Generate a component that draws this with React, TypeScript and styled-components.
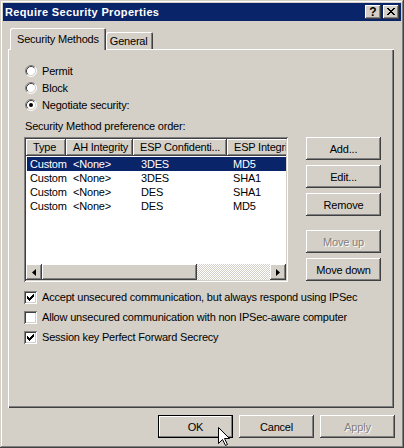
import React from "react";
import styled, { createGlobalStyle } from "styled-components";

const FACE = "#d4d0c8";
const SHADOW = "#808080";
const DARK = "#404040";
const HILITE = "#ffffff";
const NAVY = "#0a246a";

const GlobalStyle = createGlobalStyle`
  html, body { margin: 0; padding: 0; background: ${FACE}; }
  body { font-family: "Liberation Sans", Arial, sans-serif; font-size: 11px; letter-spacing: -0.2px; color: #000; }
  * { box-sizing: border-box; }
`;

const raised = `box-shadow: inset -1px -1px ${DARK}, inset 1px 1px ${HILITE}, inset -2px -2px ${SHADOW}, inset 2px 2px ${FACE};`;
const sunken = `box-shadow: inset 1px 1px ${SHADOW}, inset -1px -1px ${HILITE}, inset 2px 2px ${DARK}, inset -2px -2px ${FACE};`;

const Window = styled.div`
  position: relative;
  width: 404px;
  height: 448px;
  background: ${FACE};
  padding: 3px;
  box-shadow: inset -1px -1px ${DARK}, inset 1px 1px ${FACE}, inset -2px -2px ${SHADOW}, inset 2px 2px ${HILITE};
  display: flex;
  flex-direction: column;
`;

const TitleBar = styled.div`
  height: 18px;
  background: ${NAVY};
  display: flex;
  align-items: center;
  padding: 0 2px 0 2px;
`;

const TitleText = styled.div`
  flex: 1;
  color: #fff;
  font-weight: bold;
  font-size: 11px;
  letter-spacing: 0.35px;
  white-space: nowrap;
`;

const CaptionButtons = styled.div`
  display: flex;
  gap: 2px;
`;

const CaptionButton = styled.div`
  width: 16px;
  height: 14px;
  background: ${FACE};
  ${raised}
  display: flex;
  align-items: center;
  justify-content: center;
  font-weight: bold;
  font-size: 12px;
  letter-spacing: 0;
  line-height: 14px;
  padding-bottom: 1px;
`;

const Body = styled.div`
  flex: 1;
  display: flex;
  flex-direction: column;
  padding: 7px 0 0 5px;
`;

const TabStrip = styled.div`
  display: flex;
  align-items: flex-end;
  height: 21px;
  padding-left: 2px;
  position: relative;
  z-index: 1;
`;

const Tab = styled.div<{ $active?: boolean }>`
  height: ${(p) => (p.$active ? 22 : 17)}px;
  margin-bottom: ${(p) => (p.$active ? -1 : 0)}px;
  padding: ${(p) => (p.$active ? "0 7px 1px 7px" : "0 5px 0 4px")};
  display: flex;
  align-items: center;
  background: ${FACE};
  border-radius: 2px 2px 0 0;
  box-shadow: inset 1px 1px ${HILITE}, inset -1px 0 ${DARK}, inset -2px 0 ${SHADOW};
  white-space: nowrap;
`;

const Panel = styled.div`
  width: 386px;
  height: 359px;
  box-shadow: inset 1px 1px ${HILITE}, inset -1px -1px ${DARK}, inset -2px -2px ${SHADOW};
  padding: 13px 0 0 16px;
  display: flex;
  flex-direction: column;
`;

const OptionRow = styled.div<{ $h: number }>`
  height: ${(p) => p.$h}px;
  display: flex;
  align-items: center;
  gap: 5px;
  white-space: nowrap;
`;

const RadioGroup = styled.div`
  display: flex;
  flex-direction: column;
  padding-left: 1px;
`;

const PrefLabel = styled.div`
  margin-top: 6px;
  height: 14px;
  line-height: 14px;
  padding-left: 1px;
`;

const ListArea = styled.div`
  margin-top: 4px;
  display: flex;
`;

const ListView = styled.div`
  width: 264px;
  height: 145px;
  background: #fff;
  ${sunken}
  padding: 2px;
  display: flex;
  flex-direction: column;
  overflow: hidden;
`;

const Header = styled.div`
  display: flex;
  height: 17px;
  flex-shrink: 0;
  overflow: hidden;
`;

const HeaderCell = styled.div<{ $w: number }>`
  width: ${(p) => p.$w}px;
  flex-shrink: 0;
  height: 17px;
  line-height: 17px;
  padding-left: 7px;
  background: ${FACE};
  box-shadow: inset -1px -1px ${DARK}, inset 1px 1px ${HILITE}, inset -2px -2px ${SHADOW};
  white-space: nowrap;
  overflow: hidden;
`;

const Rows = styled.div`
  flex: 1;
  padding-top: 1px;
  overflow: hidden;
`;

const Row = styled.div<{ $selected?: boolean }>`
  display: flex;
  height: 14px;
  line-height: 14px;
  margin-left: 1px;
  background: ${(p) => (p.$selected ? NAVY : "transparent")};
  color: ${(p) => (p.$selected ? "#fff" : "#000")};
`;

const Cell = styled.div<{ $w: number; $pad: number }>`
  width: ${(p) => p.$w}px;
  flex-shrink: 0;
  padding-left: ${(p) => p.$pad}px;
  white-space: nowrap;
`;

const HScroll = styled.div`
  height: 16px;
  display: flex;
  flex-shrink: 0;
`;

const ScrollButton = styled.div`
  width: 16px;
  height: 16px;
  background: ${FACE};
  ${raised}
  display: flex;
  align-items: center;
  justify-content: center;
`;

const Thumb = styled.div<{ $w: number }>`
  width: ${(p) => p.$w}px;
  height: 16px;
  background: ${FACE};
  ${raised}
`;

const Track = styled.div`
  flex: 1;
  height: 16px;
  background: repeating-conic-gradient(${HILITE} 0 25%, ${FACE} 0 50%) 0 0 / 2px 2px;
`;

const ButtonColumn = styled.div`
  margin-left: 18px;
  width: 75px;
  display: flex;
  flex-direction: column;
`;

const Button = styled.div<{ $disabled?: boolean; $default?: boolean; $top?: number }>`
  width: 75px;
  height: 23px;
  margin-top: ${(p) => p.$top ?? 0}px;
  background: ${FACE};
  box-shadow: ${(p) =>
    p.$default
      ? `inset 0 0 0 1px #000, inset -2px -2px ${SHADOW}, inset 2px 2px ${HILITE}`
      : `inset -1px -1px ${DARK}, inset 1px 1px ${HILITE}, inset -2px -2px ${SHADOW}, inset 2px 2px ${FACE}`};
  display: flex;
  align-items: center;
  justify-content: center;
  color: ${(p) => (p.$disabled ? SHADOW : "#000")};
  text-shadow: ${(p) => (p.$disabled ? `1px 1px 0 ${HILITE}` : "none")};
  white-space: nowrap;
`;

const CheckGroup = styled.div`
  margin-top: 5px;
  display: flex;
  flex-direction: column;
`;

const CheckBox = styled.div`
  width: 13px;
  height: 13px;
  flex-shrink: 0;
  background: #fff;
  ${sunken}
  position: relative;
`;

const DialogButtons = styled.div`
  display: flex;
  justify-content: flex-end;
  gap: 6px;
  margin-top: 7px;
  padding-right: 6px;
`;

const Cursor = styled.svg`
  position: absolute;
  left: 218px;
  top: 427px;
`;

const Radio = ({ checked }: { checked?: boolean }) => (
  <svg width="12" height="12" viewBox="0 0 12 12" style={{ flexShrink: 0 }}>
    <circle cx="6" cy="6" r="5" fill="#fff" />
    <path d="M2.11 9.89 A5.5 5.5 0 0 1 9.89 2.11" fill="none" stroke={SHADOW} strokeWidth="1" />
    <path d="M9.89 2.11 A5.5 5.5 0 0 1 2.11 9.89" fill="none" stroke={HILITE} strokeWidth="1" />
    <path d="M2.82 9.18 A4.5 4.5 0 0 1 9.18 2.82" fill="none" stroke={DARK} strokeWidth="1" />
    <path d="M9.18 2.82 A4.5 4.5 0 0 1 2.82 9.18" fill="none" stroke={FACE} strokeWidth="1" />
    {checked && <circle cx="6" cy="6" r="2" fill="#000" />}
  </svg>
);

const CHECK = [
  "......X",
  ".....XX",
  "X...XXX",
  "XX.XXX.",
  "XXXXX..",
  ".XXX...",
  "..X....",
];

const Check = ({ checked }: { checked?: boolean }) => (
  <CheckBox>
    {checked && (
      <svg width="13" height="13" viewBox="0 0 13 13" style={{ position: "absolute", left: 0, top: 0 }} shapeRendering="crispEdges">
        {CHECK.flatMap((row, y) =>
          row.split("").map((c, x) =>
            c === "X" ? <rect key={`${x}-${y}`} x={3 + x} y={3 + y} width="1" height="1" fill="#000" /> : null
          )
        )}
      </svg>
    )}
  </CheckBox>
);

const COLS = [40, 67, 94, 100];
const ROWS = [
  ["Custom", "<None>", "3DES", "MD5"],
  ["Custom", "<None>", "3DES", "SHA1"],
  ["Custom", "<None>", "DES", "SHA1"],
  ["Custom", "<None>", "DES", "MD5"],
];

export default function App() {
  return (
    <>
      <GlobalStyle />
      <Window>
        <TitleBar>
          <TitleText>Require Security Properties</TitleText>
          <CaptionButtons>
            <CaptionButton>?</CaptionButton>
            <CaptionButton>
              <svg width="8" height="7" viewBox="0 0 8 7" shapeRendering="crispEdges">
                <path d="M0 0h2v1h-2zM6 0h2v1h-2zM1 1h2v1h-2zM5 1h2v1h-2zM2 2h4v1h-4zM3 3h2v1h-2zM2 4h4v1h-4zM1 5h2v1h-2zM5 5h2v1h-2zM0 6h2v1h-2zM6 6h2v1h-2z" fill="#000" />
              </svg>
            </CaptionButton>
          </CaptionButtons>
        </TitleBar>
        <Body>
          <TabStrip>
            <Tab $active>Security Methods</Tab>
            <Tab>General</Tab>
          </TabStrip>
          <Panel>
            <RadioGroup>
              <OptionRow $h={17}>
                <Radio />
                Permit
              </OptionRow>
              <OptionRow $h={17}>
                <Radio />
                Block
              </OptionRow>
              <OptionRow $h={17}>
                <Radio checked />
                Negotiate security:
              </OptionRow>
            </RadioGroup>
            <PrefLabel>Security Method preference order:</PrefLabel>
            <ListArea>
              <ListView>
                <Header>
                  <HeaderCell $w={COLS[0]}>Type</HeaderCell>
                  <HeaderCell $w={COLS[1]}>AH Integrity</HeaderCell>
                  <HeaderCell $w={COLS[2]}>ESP Confidenti...</HeaderCell>
                  <HeaderCell $w={COLS[3]}>ESP Integrity</HeaderCell>
                </Header>
                <Rows>
                  {ROWS.map((r, i) => (
                    <Row key={i} $selected={i === 0}>
                      <Cell $w={COLS[0] - 1} $pad={3}>{r[0]}</Cell>
                      <Cell $w={COLS[1]} $pad={7}>{r[1]}</Cell>
                      <Cell $w={COLS[2]} $pad={8}>{r[2]}</Cell>
                      <Cell $w={COLS[3]} $pad={6}>{r[3]}</Cell>
                    </Row>
                  ))}
                </Rows>
                <HScroll>
                  <ScrollButton>
                    <svg width="4" height="7" viewBox="0 0 4 7">
                      <path d="M4 0 L0 3.5 L4 7 Z" fill="#000" />
                    </svg>
                  </ScrollButton>
                  <Thumb $w={155} />
                  <Track />
                  <ScrollButton>
                    <svg width="4" height="7" viewBox="0 0 4 7">
                      <path d="M0 0 L4 3.5 L0 7 Z" fill="#000" />
                    </svg>
                  </ScrollButton>
                </HScroll>
              </ListView>
              <ButtonColumn>
                <Button>Add...</Button>
                <Button $top={5}>Edit...</Button>
                <Button $top={5}>Remove</Button>
                <Button $top={14} $disabled>Move up</Button>
                <Button $top={5}>Move down</Button>
              </ButtonColumn>
            </ListArea>
            <CheckGroup>
              <OptionRow $h={20}>
                <Check checked />
                Accept unsecured communication, but always respond using IPSec
              </OptionRow>
              <OptionRow $h={20}>
                <Check />
                Allow unsecured communication with non IPSec-aware computer
              </OptionRow>
              <OptionRow $h={20}>
                <Check checked />
                Session key Perfect Forward Secrecy
              </OptionRow>
            </CheckGroup>
          </Panel>
          <DialogButtons>
            <Button $default>OK</Button>
            <Button>Cancel</Button>
            <Button $disabled>Apply</Button>
          </DialogButtons>
        </Body>
        <Cursor width="13" height="20" viewBox="0 0 13 20">
          <path d="M0.5 0.5 L0.5 16.5 L4.5 12.5 L7.5 18.5 L9.5 17.5 L6.5 11.5 L11.5 11.5 Z" fill="#fff" stroke="#000" strokeWidth="1" />
        </Cursor>
      </Window>
    </>
  );
}
